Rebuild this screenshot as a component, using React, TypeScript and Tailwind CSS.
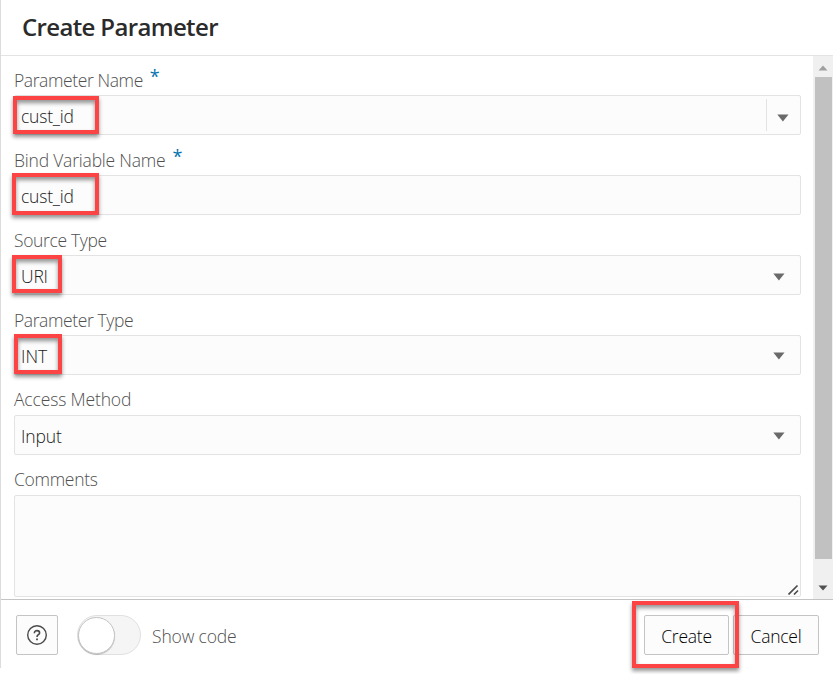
import type { ReactNode } from "react";

function Arrow() {
  return (
    <svg width="12" height="8" viewBox="0 0 12 8" className="block shrink-0">
      <path d="M0.3 0.5h11.2L5.9 7.5z" fill="#6a6a6a" />
    </svg>
  );
}

function Highlight({ className }: { className: string }) {
  return (
    <span
      className={`pointer-events-none absolute z-10 border-4 border-[#fc4444] shadow-[0_3px_4px_rgba(0,0,0,0.42),inset_0_3px_4px_rgba(0,0,0,0.42)] ${className}`}
    />
  );
}

type FieldProps = {
  label: string;
  labelClass: string;
  value: string;
  valueClass: string;
  required?: boolean;
  children?: ReactNode;
  mark?: string;
};

function Field({ label, labelClass, value, valueClass, required, children, mark }: FieldProps) {
  return (
    <div className="h-20">
      <div className="flex h-10 items-start text-[17.5px] leading-6 font-light text-[#505050]">
        <span className={`whitespace-nowrap ${labelClass}`}>{label}</span>
        {required && <span className="mt-[9px] ml-[7px] text-[18px] font-normal text-[#0572ae]">*</span>}
      </div>
      <div className="relative flex h-10 items-center justify-between rounded-[2px] border border-[#e3e3e3] bg-[#fcfcfc] pl-1.5">
        <span className={`pt-0.5 text-[17.5px] leading-6 font-light whitespace-nowrap text-[#202020] ${valueClass}`}>{value}</span>
        {children}
        {mark && <Highlight className={mark} />}
      </div>
    </div>
  );
}

export default function App() {
  return (
    <div className="h-[674px] w-[833px] overflow-hidden bg-white font-['Open_Sans','Noto_Sans',sans-serif]">
      <div className="flex h-[668px] flex-col border-l border-[#dcdcdc]">
        <header className="flex h-14 shrink-0 items-center border-b border-[#e3e3e3] pb-0.5 pl-[21px]">
          <h1 className="text-[24px] leading-8 font-semibold tracking-[-0.65px] whitespace-nowrap text-[#2b2b2b]">Create Parameter</h1>
        </header>
        <main className="flex h-[543px] shrink-0">
          <div className="-mt-px w-[812px] pr-3 pl-[13px]">
            <Field label="Parameter Name" labelClass="pt-[13px] tracking-[-0.4px]" value="cust_id" valueClass="tracking-[-0.2px]" required mark="-left-0.5 top-0 h-[38px] w-[86px]">
              <div className="flex h-8 w-[34px] items-center border-l border-[#e3e3e3] pt-[5px] pl-2.5">
                <Arrow />
              </div>
            </Field>
            <Field label="Bind Variable Name" labelClass="pt-[13px] tracking-[-0.2px]" value="cust_id" valueClass="tracking-[-0.2px]" required mark="-left-[3px] -top-[3px] h-[42px] w-[87px]" />
            <Field label="Source Type" labelClass="pt-[13px] tracking-[-0.35px]" value="URI" valueClass="tracking-[-0.2px]" mark="-left-[3px] -top-px h-[38px] w-[50px]">
              <div className="pt-1 pr-[15px]"><Arrow /></div>
            </Field>
            <Field label="Parameter Type" labelClass="pt-[13px] tracking-[-0.4px]" value="INT" valueClass="tracking-[0px]" mark="-left-px -top-0.5 h-10 w-12">
              <div className="pt-0.5 pr-[15px]"><Arrow /></div>
            </Field>
            <Field label="Access Method" labelClass="pt-3 tracking-[-0.15px]" value="Input" valueClass="tracking-[-0.1px]">
              <div className="pt-0.5 pr-[15px]"><Arrow /></div>
            </Field>
            <div className="h-10 pt-3 text-[17.5px] leading-6 font-light tracking-[-0.3px] text-[#505050]">
              <span>Comments</span>
            </div>
            <div className="flex h-[102px] items-end justify-end rounded-[2px] border border-[#e3e3e3] bg-[#fcfcfc] pr-px pb-px">
              <svg width="11" height="11" viewBox="0 0 11 11">
                <path d="M0.5 10.5l9-9M6 10.5l4-4" stroke="#4c4c4c" strokeWidth="1.7" />
              </svg>
            </div>
          </div>
          <div className="flex w-5 flex-col items-center bg-[#f0f0f0]">
            <div className="flex h-[21px] items-center pt-0.5">
              <svg width="10" height="6" viewBox="0 0 10 6"><path d="M0.5 5.5h9L5 0.5z" fill="#a0a0a0" /></svg>
            </div>
            <div className="h-[482px] w-[17px] bg-[#c1c1c1]" />
            <div className="flex flex-1 items-center pt-[17px]">
              <svg width="10" height="6" viewBox="0 0 10 6"><path d="M0.5 0.5h9L5 5.5z" fill="#505050" /></svg>
            </div>
          </div>
        </main>
        <footer className="flex flex-1 items-start border-t border-[#c4c4c4] pt-[15px] pl-[15px]">
          <button className="flex h-10 w-[42px] items-center justify-center rounded-[2px] border border-[#c4c4c4] bg-[#fcfcfc]">
            <svg width="22" height="22" viewBox="0 0 22 22" fill="none" stroke="#4a4a4a">
              <circle cx="11" cy="11" r="9.3" strokeWidth="1.4" />
              <path d="M8.4 9.2C8.4 7.5 9.5 6.6 11 6.6s2.6.9 2.6 2.3c0 1.8-2.6 1.9-2.6 4" strokeWidth="1.6" />
              <path d="M11 14.4v1.8" strokeWidth="1.8" />
            </svg>
          </button>
          <div className="ml-[19px] flex h-10 w-16 items-center rounded-full border border-[#e0e0e0] bg-[#f5f5f5]">
            <div className="h-[37px] w-[37px] rounded-full border border-[#c4c4c4] bg-white shadow-[0_1px_1px_rgba(0,0,0,0.2)]" />
          </div>
          <span className="mt-[9px] ml-[11px] w-[100px] text-[17.5px] leading-6 font-light tracking-[-0.15px] whitespace-nowrap text-[#505050]">Show code</span>
          <div className="ml-auto flex gap-1 pr-3.5">
            <button className="relative flex h-10 w-[85px] items-center justify-center rounded-[2px] border border-[#c4c4c4] bg-[#fcfcfc] pt-[3px] text-[17.5px] font-light tracking-[-0.25px] text-black">
              <span>Create</span>
              <Highlight className="-top-[15px] -left-[13px] h-[67px] w-[107px]" />
            </button>
            <button className="flex h-10 w-[86px] items-center justify-center rounded-[2px] border border-[#c4c4c4] bg-[#fcfcfc] pt-[3px] text-[17.5px] font-light tracking-[-0.25px] text-black">Cancel</button>
          </div>
        </footer>
      </div>
    </div>
  );
}
